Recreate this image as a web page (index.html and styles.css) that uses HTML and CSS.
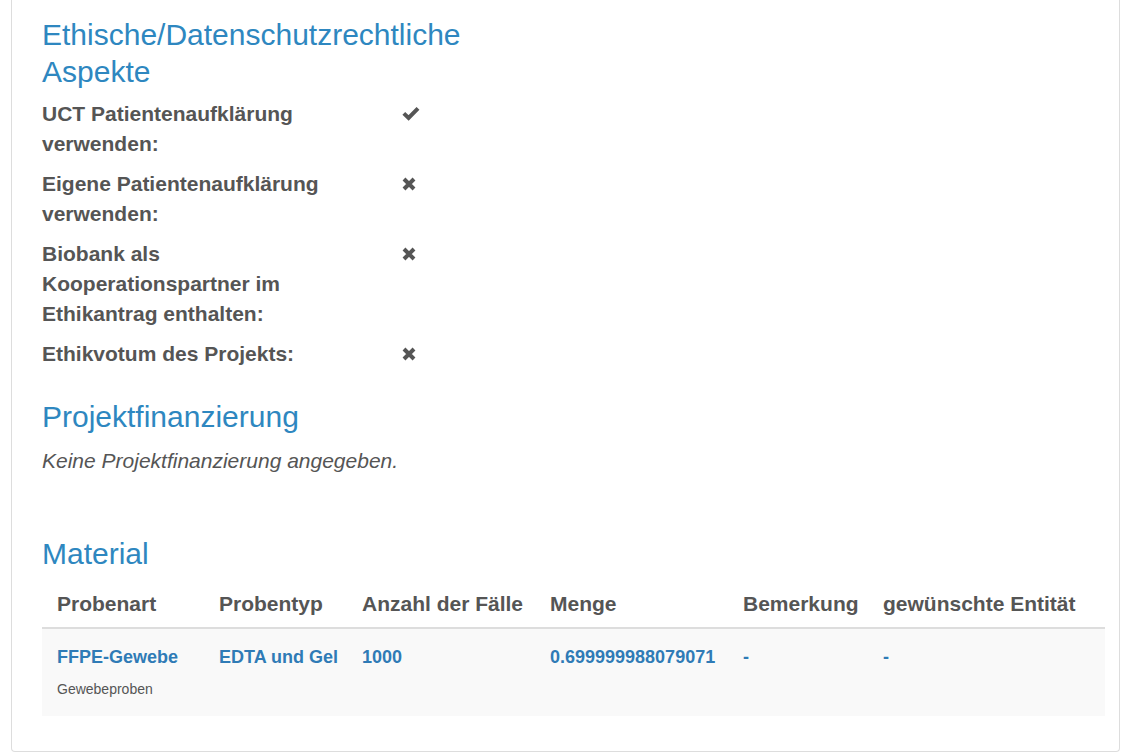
FILE: index.html
```html
<!DOCTYPE html>
<html lang="de">
<head>
<meta charset="utf-8">
<title>Projekt</title>
<link rel="stylesheet" href="styles.css">
</head>
<body>
<div class="panel">
  <section class="block block-narrow">
    <h3 class="section-title first">Ethische/Datenschutzrechtliche Aspekte</h3>
    <dl class="facts">
      <dt>UCT Patientenaufklärung verwenden:</dt>
      <dd class="icon-ok"><svg width="18" height="15" viewBox="0 0 18 15"><polyline points="1.8,7.4 6.6,12 16,2.4" fill="none" stroke="#555" stroke-width="4"/></svg></dd>
      <dt>Eigene Patientenaufklärung verwenden:</dt>
      <dd class="icon-no"><svg width="14" height="14" viewBox="0 0 14 14"><path d="M2 2 L12 12 M12 2 L2 12" stroke="#555" stroke-width="4"/></svg></dd>
      <dt>Biobank als Kooperationspartner im Ethikantrag enthalten:</dt>
      <dd class="icon-no"><svg width="14" height="14" viewBox="0 0 14 14"><path d="M2 2 L12 12 M12 2 L2 12" stroke="#555" stroke-width="4"/></svg></dd>
      <dt>Ethikvotum des Projekts:</dt>
      <dd class="icon-no"><svg width="14" height="14" viewBox="0 0 14 14"><path d="M2 2 L12 12 M12 2 L2 12" stroke="#555" stroke-width="4"/></svg></dd>
    </dl>
  </section>

  <section class="block block-funding">
    <h3 class="section-title">Projektfinanzierung</h3>
    <p class="note">Keine Projektfinanzierung angegeben.</p>
  </section>

  <section class="block block-material">
    <h3 class="section-title">Material</h3>
    <table class="material">
      <thead>
        <tr>
          <th class="c1">Probenart</th>
          <th class="c2">Probentyp</th>
          <th class="c3">Anzahl der Fälle</th>
          <th class="c4">Menge</th>
          <th class="c5">Bemerkung</th>
          <th class="c6">gewünschte Entität</th>
        </tr>
      </thead>
      <tbody>
        <tr>
          <td><a href="#">FFPE-Gewebe</a><br><small>Gewebeproben</small></td>
          <td><a href="#">EDTA und Gel</a></td>
          <td><a href="#">1000</a></td>
          <td><a href="#">0.699999988079071</a></td>
          <td><a href="#">-</a></td>
          <td><a href="#">-</a></td>
        </tr>
      </tbody>
    </table>
  </section>
</div>
</body>
</html>
```

FILE: styles.css
```css
html, body {
  margin: 0;
  padding: 0;
  background: #fff;
}

body {
  font-family: "Liberation Sans", Arial, Helvetica, sans-serif;
  font-size: 21px;
  line-height: 30px;
  color: #555;
}

.panel {
  margin: 0 12px 0 11px;
  padding: 0 14px 35px 30px;
  border: 1px solid #ddd;
  border-top: none;
  border-radius: 0 0 4px 4px;
}

.section-title {
  margin: 0;
  font-size: 30px;
  line-height: 37px;
  font-weight: normal;
  color: #2e87c0;
}

.section-title.first {
  padding-top: 16px;
}

.block-narrow {
  width: 430px;
}

.facts {
  display: grid;
  grid-template-columns: 285px 1fr;
  column-gap: 75px;
  row-gap: 10px;
  margin: 9px 0 0;
}

.facts dt {
  font-weight: bold;
}

.facts dd {
  margin: 0;
}

.facts dd svg {
  display: block;
}

.icon-ok {
  padding-top: 7px;
}

.icon-no {
  padding-top: 8px;
}

.block-funding {
  margin-top: 29px;
}

.note {
  margin: 11px 0 0;
  font-style: italic;
}

.block-material {
  margin-top: 59px;
}

.material {
  width: 100%;
  margin-top: 9px;
  border-collapse: collapse;
  border-spacing: 0;
  table-layout: fixed;
}

.material th {
  text-align: left;
  font-weight: bold;
  padding: 8px 15px;
  border-bottom: 2px solid #ddd;
  vertical-align: bottom;
  white-space: nowrap;
}

.material .c1 { width: 132px; }
.material .c2 { width: 113px; }
.material .c3 { width: 158px; }
.material .c4 { width: 163px; }
.material .c5 { width: 110px; }

.material td {
  background: #f9f9f9;
  padding: 12px 15px 12px;
  vertical-align: top;
  white-space: nowrap;
}

.material td a {
  font-size: 18px;
  font-weight: bold;
  color: #2f7bb6;
  text-decoration: none;
}

.material td small {
  font-size: 14px;
  color: #555;
}
```
